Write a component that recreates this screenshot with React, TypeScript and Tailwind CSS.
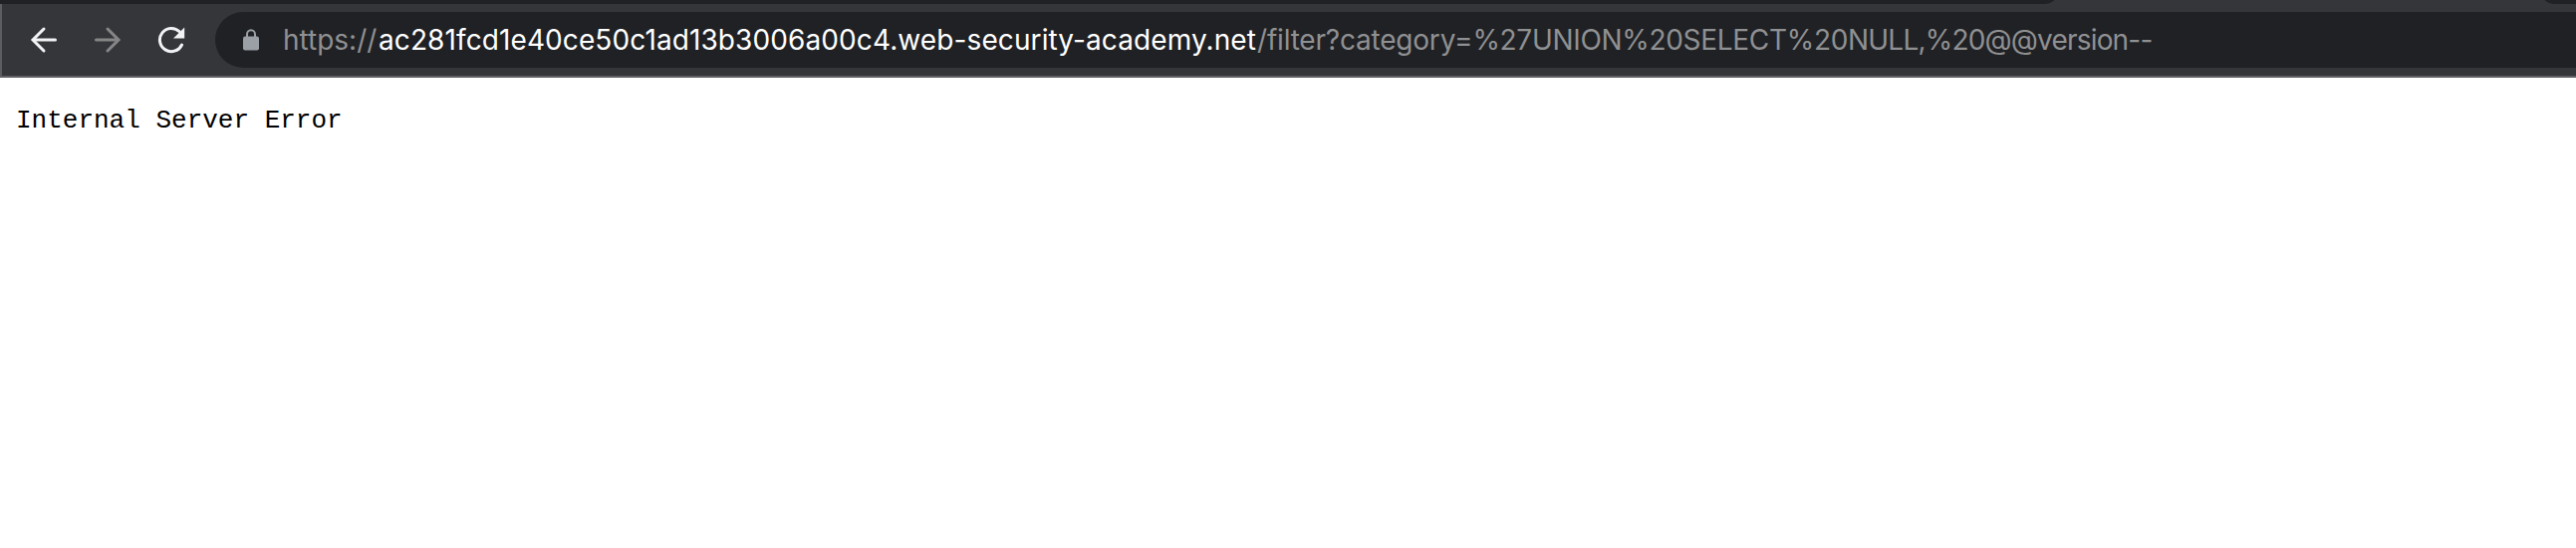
function BackIcon() {
  return (
    <svg width="28" height="28" viewBox="0 0 28 28" fill="none" stroke="#f1f3f4" strokeWidth="3" strokeLinecap="round">
      <path d="M14 3 L3 14 L14 25" strokeLinejoin="miter" />
      <path d="M4 14 H25.5" />
    </svg>
  );
}

function ForwardIcon() {
  return (
    <svg width="28" height="28" viewBox="0 0 28 28" fill="none" stroke="#868687" strokeWidth="3" strokeLinecap="round">
      <path d="M14 3 L25 14 L14 25" />
      <path d="M2.5 14 H24" />
    </svg>
  );
}

function ReloadIcon() {
  return (
    <svg width="28" height="28" viewBox="0 0 28 28" fill="none">
      <path d="M24.5 19 A11.6 11.6 0 1 1 22.2 5.8" stroke="#f1f3f4" strokeWidth="3" strokeLinecap="round" />
      <path d="M27.2 1.4 V12.6 H16 Z" fill="#f1f3f4" />
    </svg>
  );
}

function LockIcon() {
  return (
    <svg width="16" height="22" viewBox="0 0 16 22" fill="none">
      <path d="M4 9 V5.5 A4 4.2 0 0 1 12 5.5 V9" stroke="#9aa0a6" strokeWidth="2" />
      <rect x="0" y="7.5" width="16" height="14" rx="2" fill="#9aa0a6" />
    </svg>
  );
}

export default function App() {
  return (
    <div className="flex h-[550px] w-[2586px] flex-col overflow-hidden bg-white">
      <header className="flex h-[78px] shrink-0 flex-col border-b-2 border-[#605f64] bg-[#35363a]">
        <div className="flex h-1 shrink-0 items-end justify-between overflow-hidden">
          <div className="h-8 w-[2068px] shrink-0 rounded-br-[16px] bg-[#202124]" />
          <div className="h-8 w-[37px] shrink-0 rounded-bl-[16px] bg-[#202124]" />
        </div>
        <div className="flex h-[72px] items-center border-l-2 border-[#5c5d61]">
          <nav className="flex w-[214px] shrink-0 items-center gap-9 pb-px pl-[28px]">
            <button aria-label="Back"><BackIcon /></button>
            <button aria-label="Forward"><ForwardIcon /></button>
            <button aria-label="Reload"><ReloadIcon /></button>
          </nav>
          <div className="flex h-14 grow items-center rounded-l-full bg-[#202124] pl-7">
            <LockIcon />
            <div className="ml-6 flex whitespace-nowrap font-['Inter',sans-serif] text-[28px] leading-9 text-[#8f9092]">
              <span className="w-[96px]">https://</span>
              <span className="w-[882px] tracking-[0.1px] text-white">ac281fcd1e40ce50c1ad13b3006a00c4.web-security-academy.net</span>
              <span className="tracking-[-0.2px]">/filter?category=</span>
              <span className="tracking-[-0.31px]">%27UNION%20SELECT%20</span>
              <span className="tracking-[-0.8px]">NULL,%20@@version--</span>
            </div>
          </div>
        </div>
      </header>
      <main className="px-4 pt-[28px]">
        <pre className="font-['Liberation_Mono',monospace] text-[26px] leading-[30px] text-black">Internal Server Error</pre>
      </main>
    </div>
  );
}
